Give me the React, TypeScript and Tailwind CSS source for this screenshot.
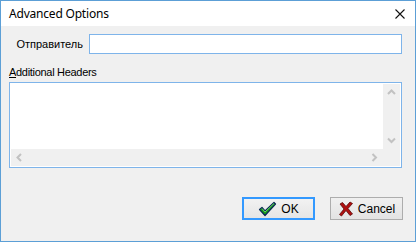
import React from "react";

const ui = { fontFamily: '"Liberation Sans", Arial, sans-serif' };
const title = { fontFamily: '"Noto Sans", "Liberation Sans", sans-serif' };

function Chevron({ dir }: { dir: "up" | "down" | "left" | "right" }) {
  const paths = {
    up: "M1 6 L4.5 2.5 L8 6",
    down: "M1 2.5 L4.5 6 L8 2.5",
    left: "M6 1 L2.5 4.5 L6 8",
    right: "M2.5 1 L6 4.5 L2.5 8",
  };
  return (
    <svg width="9" height="9" viewBox="0 0 9 9">
      <path d={paths[dir]} fill="none" stroke="#c2c2c2" strokeWidth="2" />
    </svg>
  );
}

function CheckIcon() {
  return (
    <svg width="19" height="16" viewBox="0 0 19 16">
      <path
        d="M1.5 8.5 L4 6.5 L7 10 L16 1.5 L17.5 3 L7 14.5 Z"
        fill="#16a016"
        stroke="#0b2a55"
        strokeWidth="1.2"
        strokeLinejoin="round"
      />
      <path d="M4 7.5 L7 11 L16 2.5" fill="none" stroke="#7fe07f" strokeWidth="0.8" />
    </svg>
  );
}

function CrossIcon() {
  return (
    <svg width="16" height="16" viewBox="0 0 16 16">
      <path
        d="M2 3 L4.5 1.5 L8 5.5 L12 1 L14.5 2.5 L10 7.5 L14.5 13 L12 14.5 L8 9.5 L3.5 15 L1.5 13.5 L6 8 Z"
        fill="#b01010"
        stroke="#5a0a0a"
        strokeWidth="0.8"
        strokeLinejoin="round"
      />
    </svg>
  );
}

export default function App() {
  return (
    <div className="w-[416px] h-[242px] flex flex-col border border-[#5c9fd6] bg-[#f0f0f0]">
      <div className="h-[25px] bg-white flex items-center justify-between pl-[8px] pr-[10px]">
        <span className="text-[12px] text-black tracking-[-0.2px]" style={title}>
          Advanced Options
        </span>
        <svg width="10" height="10" viewBox="0 0 10 10">
          <path d="M0.5 0.5 L9.5 9.5 M9.5 0.5 L0.5 9.5" stroke="#111" strokeWidth="1.1" />
        </svg>
      </div>

      <div className="flex-1 flex flex-col pt-[8px] pl-[8px] pr-[13px] text-[11px] text-black" style={ui}>
        <div className="flex items-center h-[20px]">
          <span className="w-[75px] text-right pr-[1px]">Отправитель</span>
          <div className="ml-[5px] flex-1 h-[20px] bg-white border border-[#7eb4ea]" />
        </div>

        <div className="mt-[12px] h-[13px] leading-[13px] tracking-[-0.3px]">
          <span className="underline underline-offset-1">A</span>dditional Headers
        </div>

        <div className="mt-[3px] h-[86px] border border-[#7eb4ea] bg-white p-[1px] flex flex-col">
          <div className="flex flex-1">
            <div className="flex-1 bg-white" />
            <div className="w-[17px] bg-[#f0f0f0] flex flex-col items-center justify-between py-[4px]">
              <Chevron dir="up" />
              <Chevron dir="down" />
            </div>
          </div>
          <div className="h-[17px] flex bg-[#f0f0f0]">
            <div className="flex-1 flex items-center justify-between px-[4px]">
              <Chevron dir="left" />
              <Chevron dir="right" />
            </div>
            <div className="w-[17px]" />
          </div>
        </div>

        <div className="mt-[29px] flex justify-end gap-[15px] mr-[-1px]">
          <button className="w-[73px] h-[23px] border-2 border-[#3399ff] bg-gradient-to-b from-[#f2f2f2] to-[#e5e5e5] flex items-center justify-center gap-[4px] text-[12px]">
            <CheckIcon />
            <span>OK</span>
          </button>
          <button className="w-[73px] h-[23px] border border-[#adadad] bg-gradient-to-b from-[#f0f0f0] to-[#e3e3e3] flex items-center justify-center gap-[4px] text-[12px]">
            <CrossIcon />
            <span>Cancel</span>
          </button>
        </div>
      </div>
    </div>
  );
}
